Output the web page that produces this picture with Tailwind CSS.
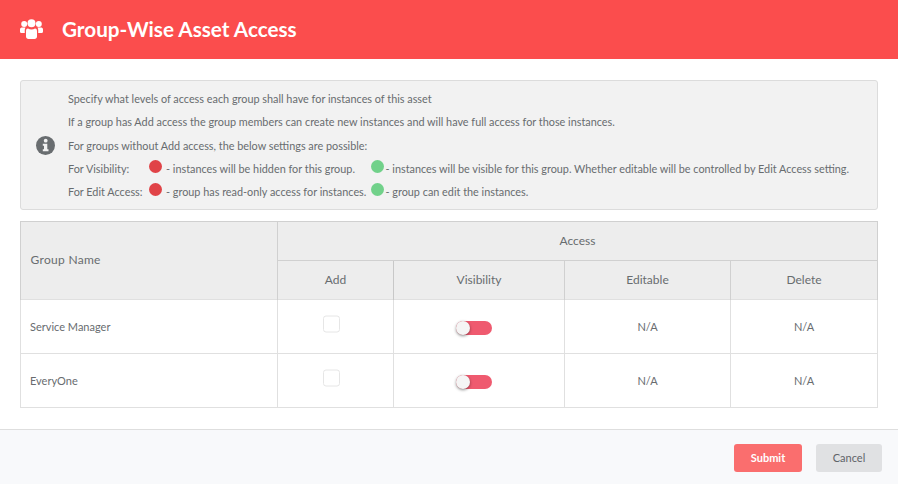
<!doctype html>
<html><head><meta charset="utf-8"><script src="https://cdn.jsdelivr.net/npm/@tailwindcss/browser@4"></script></head>
<body class="m-0 bg-white">
<div class="w-[898px] h-[484px] flex flex-col overflow-hidden bg-white font-['Lato','Liberation_Sans',sans-serif] text-[#686c6f]">
  <header class="h-[59px] shrink-0 bg-[#fb4d4d] flex items-center pl-[20px] text-white">
    <svg class="w-[23px] h-[21px]" viewBox="0 0 23 21" fill="#fff">
      <circle cx="4.2" cy="5" r="3"/><circle cx="18.8" cy="5" r="3"/><circle cx="11.5" cy="4.2" r="4"/>
      <path d="M0 10.5C0 9 1 8.6 2.5 8.6H5.5C4.8 9.8 4.6 11 4.8 14H1.4C.5 14 0 13.4 0 12.5Z"/>
      <path d="M23 10.5C23 9 22 8.6 20.5 8.6H17.5C18.2 9.8 18.4 11 18.2 14H21.6C22.5 14 23 13.4 23 12.5Z"/>
      <path d="M8 9.4C9 10 10.2 10.4 11.5 10.4S14 10 15 9.4C16.6 9.4 17 10.6 17 12.5V17.5C17 19 16 20 14.5 20H8.500C7 20 6 19 6 17.5V12.500C6 10.600 6.400 9.400 8 9.400Z"/>
    </svg>
    <h1 class="ml-[19px] text-[20.7px] font-bold leading-none">Group-Wise Asset Access</h1>
  </header>
  <main class="flex-1 px-[20px] pt-[21px]">
    <section class="h-[130px] border border-[#dcdcdc] rounded-[3px] bg-[#f2f2f2] flex items-center text-[10.85px]">
      <svg class="ml-[15px] w-[19px] h-[19px] shrink-0" viewBox="0 0 19 19"><circle cx="9.5" cy="9.5" r="9.500" fill="#696d70"/><circle cx="9.7" cy="4.700" r="1.900" fill="#f2f2f2"/><path d="M6.800 7.700H11.300V13.300H12.500V15.300H6.800V13.300H8V9.700H6.800Z" fill="#f2f2f2"/></svg>
      <div class="ml-[13px] flex flex-col w-[805px]">
        <p class="h-[23px] leading-[23px]">Specify what levels of access each group shall have for instances of this asset</p>
        <p class="h-[24px] leading-[24px]">If a group has Add access the group members can create new instances and will have full access for those instances.</p>
        <p class="h-[23px] leading-[23px]">For groups without Add access, the below settings are possible:</p>
        <p class="h-[23px] leading-[23px] flex items-center whitespace-nowrap"><span class="w-[81px] shrink-0">For Visibility:</span><span class="w-[13px] h-[13px] shrink-0 rounded-full bg-[#e04347] -translate-y-[2px]"></span><span class="ml-[4px] w-[205px] shrink-0">- instances will be hidden for this group.</span><span class="w-[13px] h-[13px] shrink-0 rounded-full bg-[#71d18a] -translate-y-[2px]"></span><span class="ml-[1.500px]">- instances will be visible for this group. Whether editable will be controlled by Edit Access setting.</span></p>
        <p class="h-[23px] leading-[23px] flex items-center whitespace-nowrap"><span class="w-[81px] shrink-0">For Edit Access:</span><span class="w-[13px] h-[13px] shrink-0 rounded-full bg-[#e04347] -translate-y-[2px]"></span><span class="ml-[4px] w-[205px] shrink-0">- group has read-only access for instances.</span><span class="w-[13px] h-[13px] shrink-0 rounded-full bg-[#71d18a] -translate-y-[2px]"></span><span class="ml-[1.500px]">- group can edit the instances.</span></p>
      </div>
    </section>
    <table class="mt-[11px] w-[857px] table-fixed border-collapse text-[11px]">
      <colgroup><col class="w-[257px]"><col class="w-[116px]"><col class="w-[171px]"><col class="w-[166px]"><col class="w-[147px]"></colgroup>
      <thead class="bg-[#ededed] text-[12px]">
        <tr class="h-[39px]">
          <th rowspan="2" class="border border-[#d0d0d0] border-b-0 font-normal text-left pl-[9.500px] pb-[2px] text-[12px] tracking-[0.3px]">Group Name</th>
          <th colspan="4" class="border border-[#d0d0d0] font-normal">Access</th>
        </tr>
        <tr class="h-[39px]">
          <th class="border-l border-[#bdbdbd] font-normal">Add</th>
          <th class="border-l border-[#c8c8c8] font-normal">Visibility</th>
          <th class="border-l border-[#d0d0d0] font-normal">Editable</th>
          <th class="border-l border-r border-[#d0d0d0] font-normal">Delete</th>
        </tr>
      </thead>
      <tbody>
        <tr class="h-[54px]">
          <td class="border border-[#e0e0e0] pl-[9px] pt-[1px]">Service Manager</td>
          <td class="border border-[#e0e0e0]"><span class="block w-[17px] h-[17px] ml-[45px] -translate-y-[2.500px] border border-[#e6e6e6] rounded-[3px] bg-white"></span></td>
          <td class="border border-[#e0e0e0]"><span class="block relative w-[36px] h-[14px] ml-[62px] translate-y-[1px] rounded-full bg-[#ef5a6f]"><span class="absolute left-0 top-0 w-[14px] h-[14px] rounded-full bg-[#f5f5f5] shadow-[0_1px_3px_rgba(0,0,0,0.45)]"></span></span></td>
          <td class="border border-[#e0e0e0] text-center pt-[1px]">N/A</td>
          <td class="border border-[#e0e0e0] text-center pt-[1px]">N/A</td>
        </tr>
        <tr class="h-[54px]">
          <td class="border border-[#e0e0e0] pl-[9px] pt-[1px]">EveryOne</td>
          <td class="border border-[#e0e0e0]"><span class="block w-[17px] h-[17px] ml-[45px] -translate-y-[2.500px] border border-[#e6e6e6] rounded-[3px] bg-white"></span></td>
          <td class="border border-[#e0e0e0]"><span class="block relative w-[36px] h-[14px] ml-[62px] translate-y-[1px] rounded-full bg-[#ef5a6f]"><span class="absolute left-0 top-0 w-[14px] h-[14px] rounded-full bg-[#f5f5f5] shadow-[0_1px_3px_rgba(0,0,0,0.45)]"></span></span></td>
          <td class="border border-[#e0e0e0] text-center pt-[1px]">N/A</td>
          <td class="border border-[#e0e0e0] text-center pt-[1px]">N/A</td>
        </tr>
      </tbody>
    </table>
  </main>
  <footer class="h-[55px] shrink-0 border-t border-[#dedede] bg-[#f8f9fb] flex items-start justify-end gap-[14px] pr-[16px] pt-[14px] text-[11px]">
    <button class="w-[68px] h-[28px] rounded-[3px] bg-[#fa6e6e] text-white font-bold">Submit</button>
    <button class="w-[66px] h-[28px] rounded-[3px] bg-[#e0e1e3] text-[#5f6368]">Cancel</button>
  </footer>
</div>
</body></html>
